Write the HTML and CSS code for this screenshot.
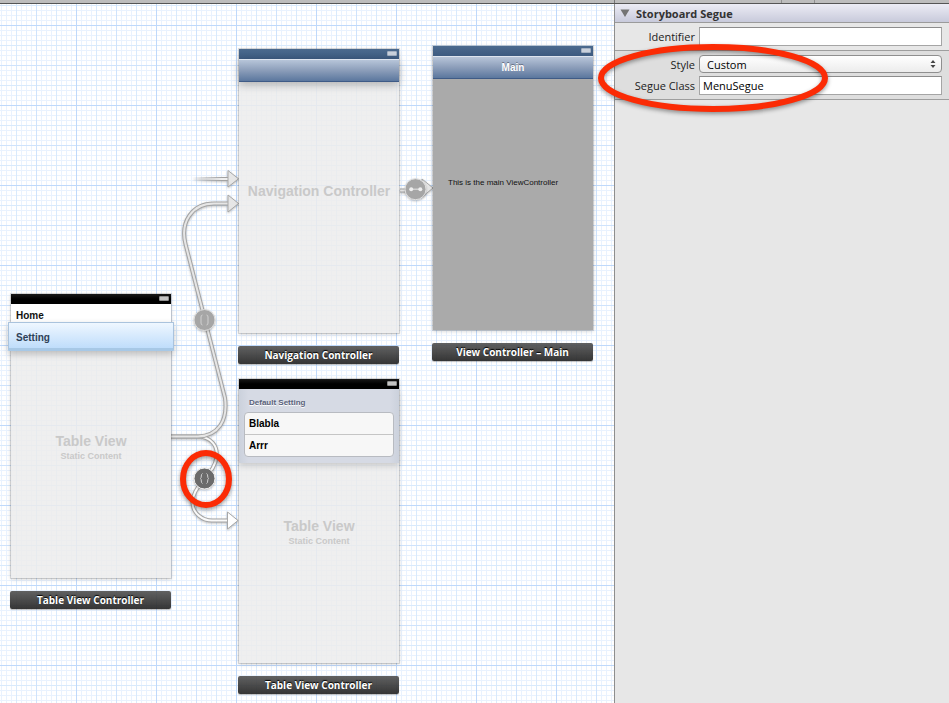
FILE: index.html
```html
<!DOCTYPE html>
<html lang="en">
<head>
<meta charset="utf-8">
<title>Storyboard</title>
<link rel="stylesheet" href="styles.css">
</head>
<body>
<div class="toolbar"><span class="toolbar-tabs"></span></div>
<div class="workspace">
  <main class="canvas">
    <svg class="wires" width="614" height="699" viewBox="0 4 614 699" aria-hidden="true">
      <defs>
        <linearGradient id="fade" gradientUnits="userSpaceOnUse" x1="192" y1="0" x2="222" y2="0">
          <stop offset="0" stop-color="#a2a2a2" stop-opacity="0"/>
          <stop offset="1" stop-color="#a2a2a2"/>
        </linearGradient>
        <linearGradient id="fade-core" gradientUnits="userSpaceOnUse" x1="192" y1="0" x2="222" y2="0">
          <stop offset="0" stop-color="#eee" stop-opacity="0"/>
          <stop offset="1" stop-color="#eee"/>
        </linearGradient>
      </defs>
      <g class="shadowed">
        <path class="edge" d="M171 436.500H196C212 436 218 447 216.500 457C215 468 209 473 204.500 478.500C198 486 192 494 192.500 503C193 514 203 520.500 212 520.500H228"/>
        <path class="core core-active" d="M171 436.500H196C212 436 218 447 216.500 457C215 468 209 473 204.500 478.500C198 486 192 494 192.500 503C193 514 203 520.500 212 520.500H228"/>
        <path class="arrow arrow-active" d="M227.500 512V529L238 520.500Z"/>
        <path class="edge" d="M171 436.500H198C218 436 228 421 225 398L185.500 244C180 222 192 203.500 214 203.500H228"/>
        <path class="core" d="M171 436.500H198C218 436 228 421 225 398L185.500 244C180 222 192 203.500 214 203.500H228"/>
        <path class="arrow" d="M228 195V212L238.500 203.500Z"/>
        <rect x="192" y="177" width="36" height="4" fill="url(#fade)"/>
        <rect x="192" y="178" width="36" height="2" fill="url(#fade-core)"/>
        <path class="arrow" d="M228 170.500V187L238.500 178.800Z"/>
        <path class="edge" d="M400 190.500H408"/>
        <path class="core" d="M400 190.500H408"/>
        <path class="arrow" d="M422 179V197L433 188Z"/>
      </g>
      <g class="shadowed">
        <circle class="badge" cx="415.500" cy="189.200" r="10.500"/>
        <path d="M411.500 189.200H420" stroke="#ddd" stroke-width="1.200"/>
        <circle cx="411.200" cy="189.200" r="2" fill="#eee"/>
        <circle cx="420.300" cy="189.200" r="2" fill="#eee"/>
        <circle class="badge" cx="204.500" cy="320" r="10.500"/>
        <path class="braces" d="M202.500 315Q201 315 201 317V323Q201 325 202.500 325M206.500 315Q208 315 208 317V323Q208 325 206.500 325"/>
        <circle class="badge badge-active" cx="204.500" cy="478.500" r="10.500"/>
        <path class="braces" d="M202.500 473.500Q201.300 474 201.300 476Q201.300 478 200.500 478.500Q201.300 479 201.300 481Q201.300 483 202.500 483.500M206.500 473.500Q207.700 474 207.700 476Q207.700 478 208.500 478.500Q207.700 479 207.700 481Q207.700 483 206.500 483.500"/>
      </g>
      <ellipse class="marker" cx="206" cy="479" rx="23" ry="26"/>
    </svg>

    <section class="scene scene-nav">
      <div class="screen">
        <div class="status status-blue"><i class="battery"></i></div>
        <div class="navbar navbar-floating"></div>
        <div class="caption caption-nav">Navigation Controller</div>
      </div>
      <div class="plate">Navigation Controller</div>
    </section>

    <section class="scene scene-main">
      <div class="screen screen-solid">
        <div class="status status-blue"><i class="battery"></i></div>
        <div class="navbar">Main</div>
        <p class="main-text">This is the main ViewController</p>
      </div>
      <div class="plate">View Controller – Main</div>
    </section>

    <section class="scene scene-menu">
      <div class="screen">
        <div class="status"><i class="battery"></i></div>
        <div class="cell">Home</div>
        <div class="cell cell-selected">Setting</div>
        <div class="caption caption-menu">Table View<small>Static Content</small></div>
      </div>
      <div class="plate">Table View Controller</div>
    </section>

    <section class="scene scene-settings">
      <div class="screen">
        <div class="status"><i class="battery"></i></div>
        <div class="group">
          <div class="group-title">Default Setting</div>
          <div class="group-list">
            <div class="group-cell">Blabla</div>
            <div class="group-cell">Arrr</div>
          </div>
        </div>
        <div class="caption caption-settings">Table View<small>Static Content</small></div>
      </div>
      <div class="plate">Table View Controller</div>
    </section>
  </main>

  <aside class="inspector">
    <h2 class="inspector-title"><button type="button" class="disclosure"><svg width="10" height="8" viewBox="0 0 10 8" aria-hidden="true"><path d="M0.500 0.500H9.500L5 8Z" fill="#747474"/></svg>Storyboard Segue</button></h2>
    <div class="fields">
      <label for="identifier">Identifier</label>
      <input id="identifier" type="text">
    </div>
    <div class="fields fields-segue">
      <label for="style">Style</label>
      <div class="popup">
        <select id="style"><option>Custom</option></select>
        <svg width="6" height="8" viewBox="0 0 6 8" aria-hidden="true"><path d="M3 0L5.500 3H0.500ZM3 8L5.500 5H0.500Z" fill="#444"/></svg>
      </div>
      <label for="segue-class">Segue Class</label>
      <input id="segue-class" type="text" value="MenuSegue">
    </div>
    <svg class="highlight" width="244" height="84" viewBox="0 0 244 84" aria-hidden="true"><ellipse class="marker" cx="121" cy="40" rx="112" ry="31"/></svg>
  </aside>
</div>
</body>
</html>
```

FILE: styles.css
```css
* { box-sizing: border-box; }

body {
  margin: 0;
  min-height: 100vh;
  display: flex;
  flex-direction: column;
  font-family: "Open Sans", "Noto Sans", sans-serif;
  font-size: 11px;
  color: #222;
}

.toolbar {
  height: 4px;
  background: #bdbdbd;
  border-bottom: 1px solid #555;
  display: flex;
  justify-content: flex-end;
}
.toolbar-tabs {
  width: 335px;
  padding-left: 166px;
  border-left: 1px solid #777;
}
.toolbar-tabs::before {
  content: "";
  display: block;
  width: 32px;
  height: 3px;
  border: solid #909090;
  border-width: 0 1px;
}

.workspace {
  flex: 1;
  display: grid;
  grid-template-columns: minmax(0, 1fr) 335px;
}

.canvas {
  position: relative;
  overflow: hidden;
  min-height: 699px;
  background-color: #fff;
  background-image:
    linear-gradient(90deg, #bfd9fb 1px, transparent 1px),
    linear-gradient(#bfd9fb 1px, transparent 1px),
    linear-gradient(90deg, #cfe3fc 1px, transparent 1px),
    linear-gradient(#cfe3fc 1px, transparent 1px),
    linear-gradient(90deg, #d9eafc 1px, transparent 1px),
    linear-gradient(#d9eafc 1px, transparent 1px),
    linear-gradient(90deg, #e9f2fe 1px, transparent 1px),
    linear-gradient(#e9f2fe 1px, transparent 1px);
  background-size: 80px 80px, 80px 80px, 40px 40px, 40px 40px, 20px 20px, 20px 20px, 5px 5px, 5px 5px;
  background-position: 76px 21px, 76px 21px, 36px 21px, 36px 21px, 16px 1px, 16px 1px, 1px 1px, 1px 1px;
}

.wires { position: absolute; left: 0; top: 0; }
.shadowed { filter: drop-shadow(0 1px 1px rgba(0, 0, 0, 0.25)); }
.edge { fill: none; stroke: #a4a4a4; stroke-width: 4; }
.core { fill: none; stroke: #e6e6e6; stroke-width: 2; }
.core-active { stroke: #fafafa; }
.arrow { fill: #e6e6e6; stroke: #a8a8a8; stroke-width: 1; }
.arrow-active { fill: #fff; }
.badge { fill: #a6a6a6; stroke: #dedede; stroke-width: 1; }
.badge-active { fill: #6b6b6b; stroke: #eee; }
.braces { fill: none; stroke: #d0d0d0; stroke-width: 1; }
.marker {
  fill: none;
  stroke: #fb2b05;
  stroke-width: 6;
  filter: drop-shadow(0 2px 2px rgba(0, 0, 0, 0.4));
}

.scene {
  position: absolute;
  width: 160px;
  display: flex;
  flex-direction: column;
  gap: 13px;
  font-family: "Liberation Sans", Arial, sans-serif;
}
.scene-nav { left: 239px; top: 45px; }
.scene-main { left: 433px; top: 42px; }
.scene-menu { left: 11px; top: 290px; }
.scene-settings { left: 239px; top: 375px; }

.screen {
  height: 284px;
  display: flex;
  flex-direction: column;
  background: rgba(236, 236, 236, 0.84);
  box-shadow: 0 0 0 1px rgba(0, 0, 0, 0.12), 0 1px 4px rgba(0, 0, 0, 0.2);
}
.screen-solid { background: #aaa; }

.plate {
  height: 18px;
  margin: 0 0 0 -1px;
  border-radius: 2px;
  background: linear-gradient(rgba(84, 84, 84, 0.92), rgba(36, 36, 36, 0.92));
  box-shadow: 0 1px 1px rgba(0, 0, 0, 0.25);
  color: #fff;
  font: bold 10px/18px "Open Sans", "Noto Sans", sans-serif;
  text-align: center;
  text-shadow: 0 -1px 1px #000;
}

.status {
  height: 10px;
  padding: 2px 2px 0;
  background: linear-gradient(#181818, #000 50%);
  display: flex;
  justify-content: flex-end;
}
.status-blue { background: linear-gradient(#4b6a8e, #3c5a80); }
.battery {
  width: 10px;
  height: 5px;
  border: 1px solid #8f8f8f;
  border-radius: 1px;
  background: #c4c4c4;
}
.status-blue .battery { border-color: #a3b0c2; background: #c9d1dc; }

.navbar {
  height: 23px;
  border-top: 1px solid #dde4ef;
  border-bottom: 1px solid #3f5b86;
  background: linear-gradient(#b7c5d9, #8b9db9 50%, #5b779e);
  color: #fff;
  font-weight: bold;
  font-size: 10px;
  line-height: 22px;
  text-align: center;
  text-shadow: 0 -1px 0 rgba(0, 0, 0, 0.35);
}
.navbar-floating { box-shadow: 0 3px 8px rgba(0, 0, 0, 0.25); }

.main-text {
  margin: 98px 15px 0;
  font-size: 8px;
  line-height: 12px;
  color: #111;
  white-space: nowrap;
}

.cell {
  height: 22px;
  padding-left: 5px;
  background: #fff;
  font-weight: bold;
  font-size: 10px;
  line-height: 23px;
  color: #111;
}
.cell-selected {
  position: relative;
  height: 29px;
  margin: -4px -3px 0;
  padding-left: 7px;
  border: 1px solid #aac3dd;
  border-bottom: 3px solid #a7c8e6;
  border-radius: 1px;
  background: linear-gradient(#eff7ff, #bfddfb);
  box-shadow: 0 3px 7px rgba(0, 0, 0, 0.22);
  line-height: 29px;
  color: #2e4157;
}

.caption {
  color: #c9c9c9;
  font-weight: bold;
  font-size: 14px;
  line-height: 16px;
  text-align: center;
  white-space: nowrap;
}
.caption small {
  display: block;
  font-size: 9px;
  line-height: 14px;
}
.caption-nav { margin-top: 101px; }
.caption-menu { margin-top: 82px; }
.caption-settings { margin-top: 55px; }

.group {
  padding: 8px 5px 6px;
  background: linear-gradient(90deg, #cbd1dc, #d6dae4 6%, #d6dae4 94%, #cbd1dc);
  box-shadow: 0 3px 6px rgba(0, 0, 0, 0.15);
  font-weight: bold;
}
.group-title {
  padding-left: 5px;
  font-size: 8px;
  line-height: 12px;
  color: #59617a;
  text-shadow: 0 1px 0 #fff;
}
.group-list {
  margin-top: 3px;
  border: 1px solid #b8bbc1;
  border-radius: 4px;
  background: #f7f7f7;
  font-size: 10px;
  line-height: 21px;
  color: #000;
}
.group-cell { padding-left: 4px; }
.group-cell + .group-cell { border-top: 1px solid #c5c5c5; }

.inspector {
  position: relative;
  border-left: 1px solid #8e8e8e;
  background: #e7e7e7;
}
.inspector-title {
  margin: 0;
  border-bottom: 1px solid #9b9b9b;
  background: linear-gradient(#ececf5, #c8cadb);
}
.disclosure {
  width: 100%;
  height: 18px;
  padding: 0 5px;
  border: 0;
  background: none;
  display: flex;
  align-items: center;
  gap: 6px;
  font: bold 11px "Open Sans", "Noto Sans", sans-serif;
  color: #333;
}

.fields {
  padding: 4px 7px;
  border-bottom: 1px solid #9e9e9e;
  display: grid;
  grid-template-columns: 73px minmax(0, 1fr);
  gap: 3px 4px;
  align-items: center;
}
.fields-segue { background: #dedede; }
.fields label { text-align: right; white-space: nowrap; }
.fields input,
.fields select {
  width: 100%;
  height: 19px;
  margin: 0;
  padding: 0 3px;
  border: 1px solid #a5a5a5;
  border-top-color: #8c8c8c;
  border-radius: 0;
  background: #fff;
  color: #000;
  font: 11px "Open Sans", "Noto Sans", sans-serif;
  display: block;
}
.fields select {
  appearance: none;
  height: 18px;
  padding: 0 7px;
  border: 1px solid #8f8f8f;
  border-radius: 4px;
  background: linear-gradient(#fff, #ececec);
}
.popup { position: relative; }
.popup svg { position: absolute; right: 6px; top: 5px; pointer-events: none; }

.highlight {
  position: absolute;
  left: -23px;
  top: 34px;
  pointer-events: none;
}
```
